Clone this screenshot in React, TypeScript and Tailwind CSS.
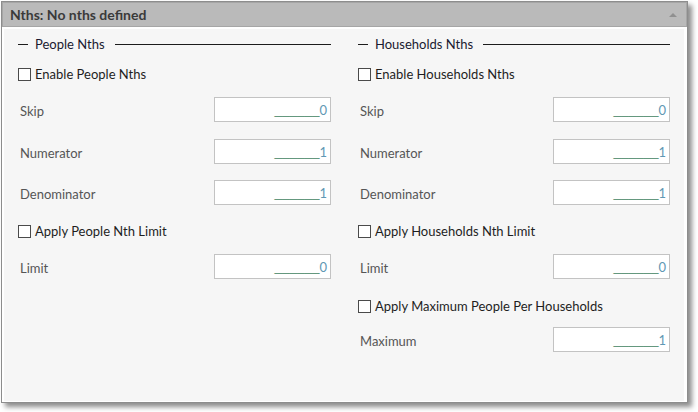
import React from "react";

const FONT = { fontFamily: "Lato, 'Open Sans', sans-serif" };

function Legend({ title }: { title: string }) {
  return (
    <div className="flex h-[16px] items-center">
      <div className="h-px w-[10px] bg-[#1c1c1c]" />
      <span className="ml-[7px] text-[13px] leading-[16px] text-[#1a1a30]">{title}</span>
      <div className="ml-[10px] h-px flex-1 bg-[#1c1c1c]" />
    </div>
  );
}

function Check({ label, className = "" }: { label: string; className?: string }) {
  return (
    <div className={`flex h-[16px] items-center ${className}`}>
      <div className="h-[13px] w-[13px] border border-[#4a4a4a] bg-white" />
      <span className="ml-[4px] text-[13px] leading-[16px] text-[#1e1e1e]">{label}</span>
    </div>
  );
}

function Field({ label, value, className = "" }: { label: string; value: string; className?: string }) {
  return (
    <div className={`flex h-[25px] items-start justify-between ${className}`}>
      <span className="ml-[2px] mt-[5px] text-[13px] leading-[18px] text-[#555555]">{label}</span>
      <div className="flex h-[25px] w-[117px] items-center justify-end border border-[#c3c3c3] bg-white pr-[3px]">
        <span
          className="text-[13.5px] leading-[14px] text-[#4e8a6c]"
          style={{ fontFamily: "'Liberation Sans', sans-serif" }}
        >
          ______
        </span>
        <span className="text-[13px] leading-[14px] text-[#5f98b4]">{value}</span>
      </div>
    </div>
  );
}

export default function App() {
  return (
    <div className="h-[412px] w-[698px] bg-white" style={FONT}>
      <div className="ml-[1px] mt-[1px] flex h-[402px] w-[687px] flex-col border border-[#8d8d8d] bg-white shadow-[4px_4px_5px_rgba(0,0,0,0.45)]">
        <div className="flex h-[25px] items-center justify-between border border-[#a6a6a6] bg-[#bababa] pl-[7px] pr-[9px]">
          <span className="text-[14px] font-bold leading-[18px] text-[#3a3a3a]">Nths: No nths defined</span>
          <svg width="8" height="5" viewBox="0 0 8 5">
            <path d="M0 5 L4 1 L8 5 Z" fill="#909090" />
          </svg>
        </div>
        <div className="mb-[1px] ml-[2px] mr-[3px] mt-[2px] flex flex-1 gap-[27px] bg-[#f6f6f6] pl-[14px] pr-[13px] pt-[7px]">
          <div className="flex w-[313px] flex-col">
            <Legend title="People Nths" />
            <Check label="Enable People Nths" className="mt-[14px]" />
            <Field label="Skip" value="0" className="mt-[15px]" />
            <Field label="Numerator" value="1" className="mt-[17px]" />
            <Field label="Denominator" value="1" className="mt-[16px]" />
            <Check label="Apply People Nth Limit" className="mt-[18px]" />
            <Field label="Limit" value="0" className="mt-[15px]" />
          </div>
          <div className="flex w-[312px] flex-col">
            <Legend title="Households Nths" />
            <Check label="Enable Households Nths" className="mt-[14px]" />
            <Field label="Skip" value="0" className="mt-[15px]" />
            <Field label="Numerator" value="1" className="mt-[17px]" />
            <Field label="Denominator" value="1" className="mt-[16px]" />
            <Check label="Apply Households Nth Limit" className="mt-[18px]" />
            <Field label="Limit" value="0" className="mt-[15px]" />
            <Check label="Apply Maximum People Per Households" className="mt-[19px]" />
            <Field label="Maximum" value="1" className="mt-[13px]" />
          </div>
        </div>
      </div>
    </div>
  );
}
